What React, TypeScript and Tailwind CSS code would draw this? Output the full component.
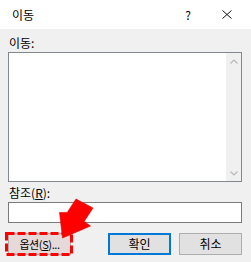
import React from "react";

const font = { fontFamily: '"Noto Sans CJK KR", "Noto Sans", sans-serif' };

function Chevron({ up }: { up?: boolean }) {
  return (
    <svg width="8" height="5" viewBox="0 0 8 5" className="block">
      <polyline
        points={up ? "0.5,4.5 4,1 7.5,4.5" : "0.5,0.5 4,4 7.5,0.5"}
        fill="none"
        stroke="#b8b8b8"
        strokeWidth="1.2"
      />
    </svg>
  );
}

export default function App() {
  return (
    <div
      className="relative w-[251px] h-[262px] bg-[#f0f0f0] text-black text-[12px] overflow-hidden"
      style={font}
    >
      {/* Title bar */}
      <div className="h-[29px] bg-white flex items-center pl-[12px] pr-[19px]">
        <span className="leading-[16px]">이동</span>
        <span className="ml-auto mr-[31px] leading-[16px] text-[12px]">?</span>
        <svg width="10" height="9" viewBox="0 0 10 9" className="block">
          <line x1="0.5" y1="0.5" x2="9.5" y2="8.5" stroke="#111" strokeWidth="1" />
          <line x1="9.5" y1="0.5" x2="0.5" y2="8.5" stroke="#111" strokeWidth="1" />
        </svg>
      </div>

      {/* Body */}
      <div className="flex flex-col pl-[8px] pr-[9px] pt-[6px]">
        <div className="h-[16px] leading-[16px] pl-[1px]">이동:</div>
        <div className="mt-[1px] h-[130px] border border-[#828790] bg-white flex justify-end">
          <div className="w-[15px] bg-[#f0f0f0] flex flex-col items-center justify-between pt-[6px] pb-[5px]">
            <Chevron up />
            <Chevron />
          </div>
        </div>
        <div className="mt-[3px] h-[16px] leading-[16px] pl-[1px]">
          참조(<span className="underline">R</span>):
        </div>
        <div className="mt-[1px] h-[21px] border border-[#7a7a7a] bg-white" />
        <div className="mt-[10px] flex items-center">
          <button className="w-[63px] h-[22px] border border-[#adadad] bg-[#e5d9d9] text-[11px] tracking-[-0.4px] leading-[16px]">
            옵션(<span className="underline">S</span>)...
          </button>
          <button className="ml-auto w-[63px] h-[22px] border-2 border-[#0078d7] bg-[#e1e1e1] text-[12px] leading-[16px]">
            확인
          </button>
          <button className="ml-[8px] w-[63px] h-[22px] border border-[#adadad] bg-[#e1e1e1] text-[12px] leading-[16px]">
            취소
          </button>
        </div>
      </div>

      {/* Red dashed annotation box and arrow */}
      <svg
        className="absolute left-0 top-0 pointer-events-none"
        width="251"
        height="262"
        viewBox="0 0 251 262"
      >
        <rect
          x="6.5"
          y="233.5"
          width="65"
          height="21"
          fill="none"
          stroke="#ff0000"
          strokeWidth="3"
          strokeDasharray="8 3"
        />
        <polygon
          points="76,199 93,208 84.2,221.4 90.5,226 62.5,238 59.5,212.5 67.2,212.4"
          fill="#ff0000"
          stroke="#e00000"
          strokeWidth="0.6"
          strokeLinejoin="round"
        />
      </svg>
    </div>
  );
}
